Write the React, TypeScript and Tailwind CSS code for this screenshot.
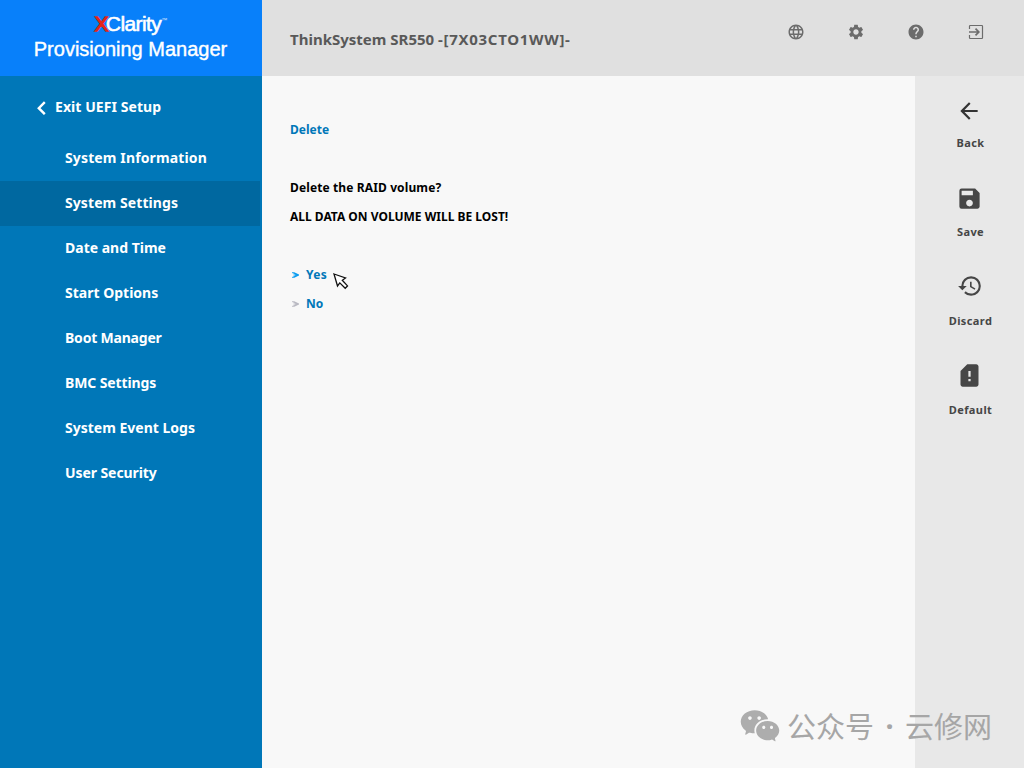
import { MdArrowBack, MdHelp, MdHistory, MdLanguage, MdSave, MdSdCardAlert, MdSettings } from "react-icons/md";
import { RiWechatFill } from "react-icons/ri";

const menu = [
  { label: "System Information", cls: "tracking-[0.13px]" },
  { label: "System Settings", cls: "tracking-[0.08px]" },
  { label: "Date and Time", cls: "tracking-normal" },
  { label: "Start Options", cls: "tracking-normal" },
  { label: "Boot Manager", cls: "tracking-[-0.2px]" },
  { label: "BMC Settings", cls: "tracking-[-0.12px]" },
  { label: "System Event Logs", cls: "tracking-normal" },
  { label: "User Security", cls: "tracking-[-0.08px]" },
];

const actions = [
  { label: "Back", icon: <MdArrowBack size={26} className="text-[#333]" />, cls: "pr-px" },
  { label: "Save", icon: <MdSave size={27} />, cls: "pb-[2px]" },
  { label: "Discard", icon: <MdHistory size={26} />, cls: "pb-[5px] pl-px" },
  { label: "Default", icon: <MdSdCardAlert size={27} />, cls: "pb-1" },
];

function ExitIcon() {
  return (
    <svg width="16" height="16" viewBox="0 0 16 16" fill="none" stroke="currentColor">
      <path d="M1.5 5V2.2q0-.7.7-.7h11.6q.7 0 .7.7v11.6q0 .7-.7.7H2.2q-.7 0-.7-.7V11" strokeWidth="1.2" />
      <path d="M1 8h9.5M7.5 4.7 10.8 8l-3.3 3.3" strokeWidth="1.7" />
    </svg>
  );
}

function Chevron({ color }: { color: string }) {
  return (
    <svg width="7" height="6" viewBox="0 0 7 6" fill={color}>
      <path d="M0 .3h2.300L7 2.500v1L2.300 5.700H0v-.8l3.800-1.400H1.500V2.500h2.300L0 1.100z" />
    </svg>
  );
}

function Sidebar() {
  return (
    <aside className="w-[262px] shrink-0 bg-[#0077b8] text-white">
      <div className="h-[76px] bg-[#0880fa] pt-3 text-center font-['Liberation_Sans']">
        <div className="-ml-px text-[21px] leading-6 tracking-[-0.6px] [-webkit-text-stroke:0.6px_currentColor]">
          <span className="text-[#e1251b] [-webkit-text-stroke:1.3px_currentColor]">X</span>
          <span className="-ml-[2px]">Clarity</span>
          <span className="align-top text-[6px] leading-4 opacity-80 [-webkit-text-stroke:0]">™</span>
        </div>
        <div className="-ml-px text-[20px] leading-[26px] [-webkit-text-stroke:0.4px_currentColor]">Provisioning Manager</div>
      </div>
      <a href="#" className="flex h-[60px] items-center pt-[2px] pl-9 text-sm font-bold">
        <svg width="10" height="14" viewBox="0 0 10 14" fill="none" stroke="currentColor" strokeWidth="2.4" className="mt-px">
          <path d="M8.800 1.200 2.800 7.200l6 6" />
        </svg>
        <span className="ml-[9px] tracking-[0.07px]">Exit UEFI Setup</span>
      </a>
      <nav>
        {menu.map((m) => (
          <a
            key={m.label}
            href="#"
            className={`flex h-[45px] w-[260px] items-center pb-[2px] pl-[65px] text-sm font-bold ${m.cls} ${m.label === "System Settings" ? "bg-[#0068a0]" : ""}`}
          >
            {m.label}
          </a>
        ))}
      </nav>
    </aside>
  );
}

export default function App() {
  return (
    <div className="relative flex h-[768px] w-[1024px] overflow-hidden bg-[#f8f8f8] font-['Noto_Sans',sans-serif]">
      <Sidebar />
      <div className="flex flex-1 flex-col">
        <header className="flex h-[76px] justify-between bg-[#e0e0e0] pr-10 pl-7 text-[#595959]">
          <h1 className="pt-[27px] text-[15px] leading-6 font-bold">
            ThinkSystem SR550 <span className="tracking-[0.7px]">-[7X03CTO1WW]-</span>
          </h1>
          <div className="flex gap-[42px] pt-[23px] text-[#6c6c6c]">
            <MdLanguage size={18} />
            <MdSettings size={18} />
            <MdHelp size={18} />
            <div className="pt-px pl-px">
              <ExitIcon />
            </div>
          </div>
        </header>
        <div className="flex flex-1">
          <main className="flex-1 pt-[39px] pl-7 text-[12px] leading-[29px] font-bold text-black">
            <h2 className="text-[#0077b8]">Delete</h2>
            <p className="mt-[29px] tracking-[0.12px]">Delete the RAID volume?</p>
            <p>ALL DATA ON VOLUME WILL BE LOST!</p>
            <ul className="mt-[29px] text-[#0077b8]">
              <li className="flex items-center pl-[2px]">
                <Chevron color="#0a9cf0" />
                <span className="ml-[7px] tracking-[0.3px]">Yes</span>
              </li>
              <li className="flex items-center pl-[2px]">
                <Chevron color="#b9b9c2" />
                <span className="ml-[7px]">No</span>
              </li>
            </ul>
          </main>
          <aside className="w-[109px] bg-[#e8e8e8] pt-[21px] text-[#464646]">
            {actions.map((a) => (
              <button key={a.label} className="flex h-[89px] w-full flex-col items-center text-[11px] leading-4 font-bold">
                <span className={`flex h-[27px] items-center ${a.cls}`}>{a.icon}</span>
                <span className="mt-[11px] pl-[2px] tracking-[0.4px]">{a.label}</span>
              </button>
            ))}
          </aside>
        </div>
      </div>

      <svg className="absolute top-[273px] left-[333px]" width="16" height="17" viewBox="0 0 16 17">
        <path d="M1 1l11.500 4-3.200 2.300 5.200 5.600-2.300 2.400-5.400-5.400L4.500 13z" fill="#fff" stroke="#111" strokeWidth="1.300" />
      </svg>

      <div className="absolute top-[704px] left-[739px] flex h-11 items-center text-[#adadad]">
        <RiWechatFill size={42} />
        <div className="ml-[6px] flex text-[29px] text-[#a6a6a6] font-['Noto_Sans_CJK_SC',sans-serif]">
          <span>公众号</span>
          <span className="w-[31px] text-center font-bold font-['Noto_Sans']">·</span>
          <span>云修网</span>
        </div>
      </div>
    </div>
  );
}
